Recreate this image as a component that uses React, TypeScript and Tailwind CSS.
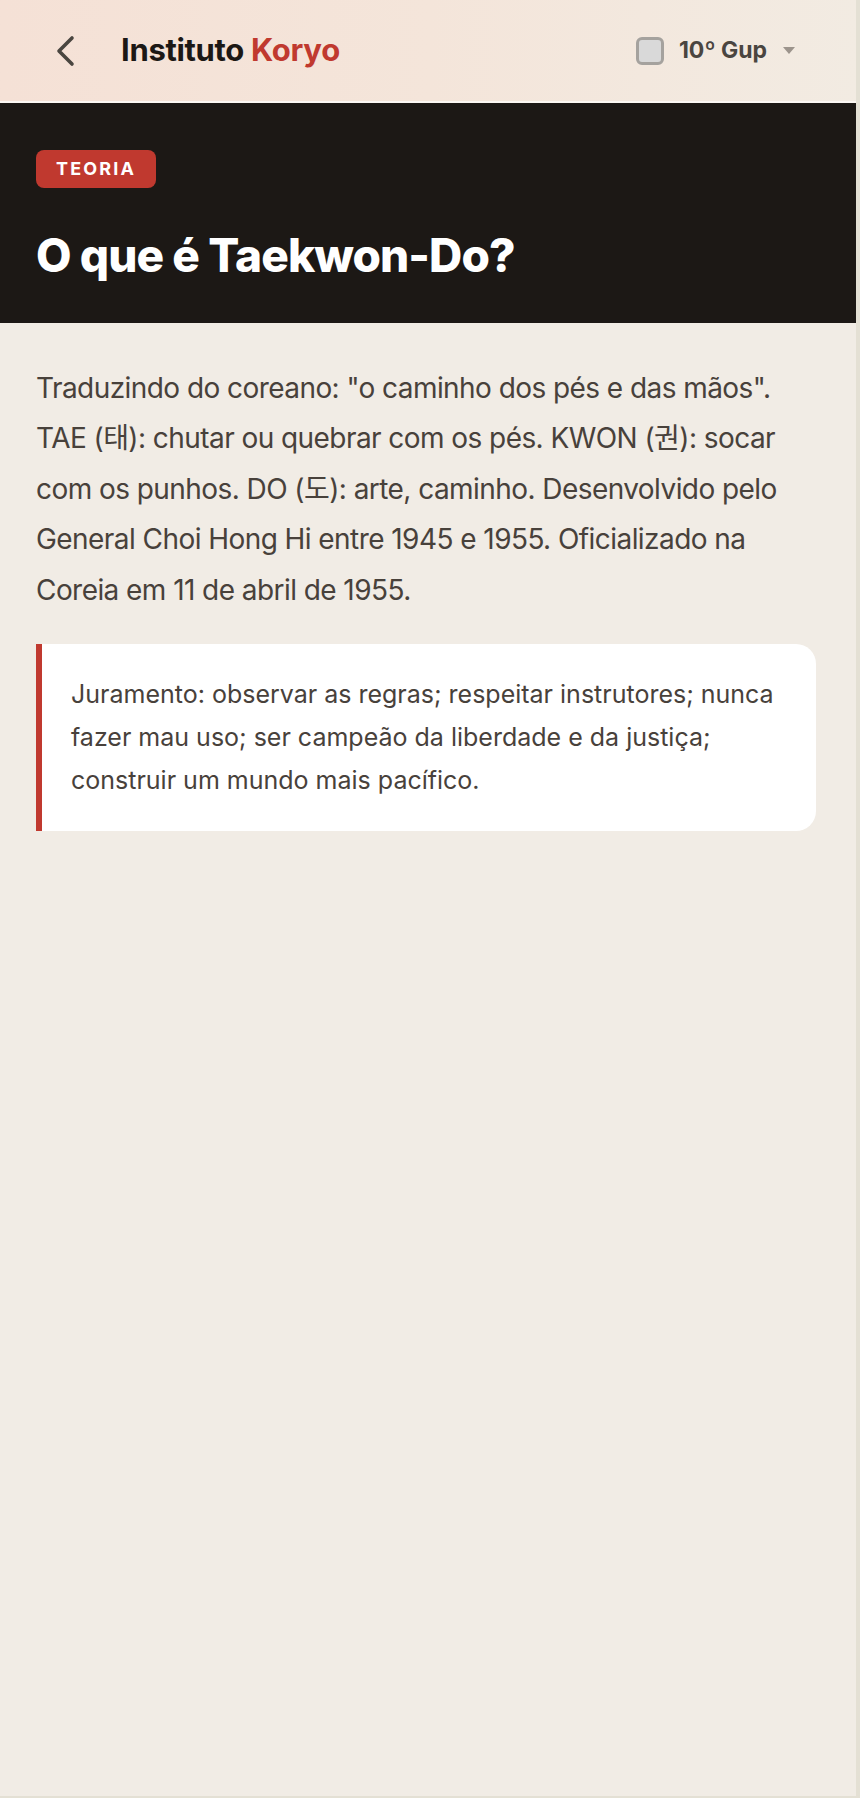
import React from 'react';

const font = { fontFamily: 'Inter, "Noto Sans CJK KR", sans-serif' };

function BackIcon() {
  return (
    <svg width="20" height="32" viewBox="0 0 20 32" fill="none">
      <polyline
        points="16,3 3,16 16,29"
        stroke="#4a4640"
        strokeWidth="3.6"
        strokeLinecap="round"
        strokeLinejoin="round"
      />
    </svg>
  );
}

export default function App() {
  return (
    <div className="w-[860px] h-[1798px] bg-[#e4e0d4]" style={font}>
      <div className="w-[856px] h-[1796px] bg-[#f1ece5] flex flex-col">
        {/* Top bar */}
        <header className="h-[103px] border-b-2 border-[#fbf7f3] bg-gradient-to-r from-[#f5e1d6] via-[#f4e5da] to-[#f2ebe2] flex items-center pl-[56px] pr-[61px]">
          <button className="flex items-center justify-center w-5 h-8">
            <BackIcon />
          </button>
          <h1 className="ml-[45px] text-[31px] font-bold tracking-[-0.01em] text-[#1c1815]">
            Instituto <span className="text-[#c0392f]">Koryo</span>
          </h1>
          <div className="ml-auto flex items-center">
            <span className="w-7 h-7 rounded-md border-[3px] border-[#a5a29e] bg-[#d9d9d9]" />
            <span className="ml-[15px] text-[23px] font-bold text-[#4a4540]">10º Gup</span>
            <svg className="ml-[16px]" width="12" height="7" viewBox="0 0 12 7">
              <polygon points="0,0 12,0 6,7" fill="#9c948c" />
            </svg>
          </div>
        </header>

        {/* Title band */}
        <section className="bg-[#1c1815] pt-[47px] pb-[40px] px-9">
          <span className="inline-block h-[38px] px-5 rounded-lg bg-[#c0392f] text-white text-[18px] font-bold tracking-[0.12em] leading-[38px]">
            TEORIA
          </span>
          <h2 className="mt-[40px] text-[46px] leading-[55px] font-extrabold text-white tracking-[-0.02em]">
            O que é Taekwon-Do?
          </h2>
        </section>

        {/* Content */}
        <main className="pl-9 pr-10 pt-10">
          <p className="text-[28px] leading-[1.8] text-[#48413b] tracking-[-0.02em]">
            Traduzindo do coreano: "o caminho dos pés e das mãos". TAE (태): chutar ou quebrar com os pés. KWON (권): socar com os punhos. DO (도): arte, caminho. Desenvolvido pelo General Choi Hong Hi entre 1945 e 1955. Oficializado na Coreia em 11 de abril de 1955.
          </p>
          <blockquote className="mt-[29px] bg-white border-l-[6px] border-[#c0392f] rounded-r-[20px] pl-[29px] pr-5 py-[29px] text-[25px] leading-[43px] text-[#48413b]">
            Juramento: observar as regras; respeitar instrutores; nunca fazer mau uso; ser campeão da liberdade e da justiça; construir um mundo mais pacífico.
          </blockquote>
        </main>
      </div>
    </div>
  );
}
